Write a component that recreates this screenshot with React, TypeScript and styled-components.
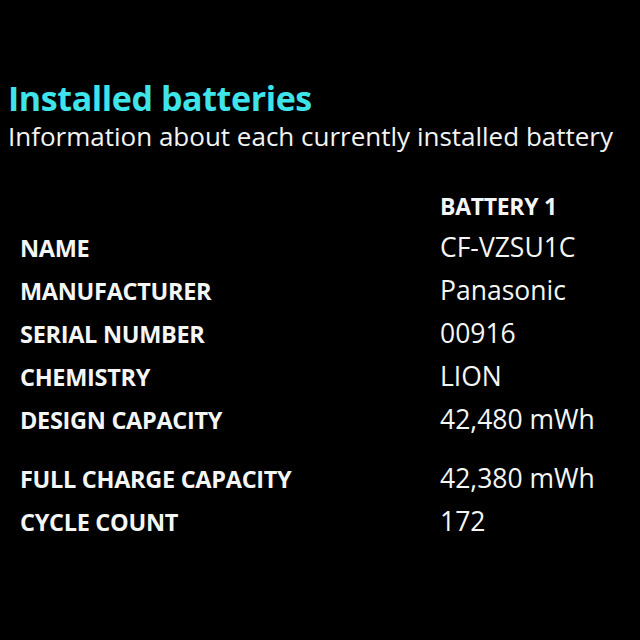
import styled, { createGlobalStyle } from 'styled-components';

const GlobalStyle = createGlobalStyle`
  html, body {
    margin: 0;
    padding: 0;
    background: #000;
  }
  body {
    font-family: "Open Sans", "Noto Sans", sans-serif;
    color: #f4f6f6;
  }
`;

const rows = [
  { label: 'NAME', value: 'CF-VZSU1C' },
  { label: 'MANUFACTURER', value: 'Panasonic' },
  { label: 'SERIAL NUMBER', value: '00916' },
  { label: 'CHEMISTRY', value: 'LION' },
  { label: 'DESIGN CAPACITY', value: '42,480 mWh' },
  { label: 'FULL CHARGE CAPACITY', value: '42,380 mWh', gap: true },
  { label: 'CYCLE COUNT', value: '172' },
];

const App = () => {
  return (
    <Page>
      <GlobalStyle />
      <Title>Installed batteries</Title>
      <Subtitle>Information about each currently installed battery</Subtitle>
      <Table>
        <HeadRow>
          <span />
          <BatteryHead>BATTERY 1</BatteryHead>
        </HeadRow>
        {rows.map((row) => (
          <Row key={row.label} $gap={row.gap}>
            <Label>{row.label}</Label>
            <Value>{row.value}</Value>
          </Row>
        ))}
      </Table>
    </Page>
  );
};

export default App;

const Page = styled.div`
  width: 640px;
  height: 640px;
  box-sizing: border-box;
  padding: 78px 0 0 8px;
  background: #000;
  overflow: hidden;
`;

const Title = styled.h1`
  margin: 0;
  font-size: 34px;
  font-weight: 700;
  line-height: 40px;
  color: #3fe3ea;
  letter-spacing: -0.4px;
`;

const Subtitle = styled.div`
  margin-top: 2px;
  font-size: 26px;
  font-weight: 400;
  line-height: 32px;
  color: #f2f4f4;
  letter-spacing: 0;
  white-space: nowrap;
`;

const Table = styled.div`
  margin-top: 36px;
  padding-left: 12px;
  display: flex;
  flex-direction: column;
`;

const HeadRow = styled.div`
  display: grid;
  grid-template-columns: 420px auto;
  height: 38px;
  line-height: 36px;
`;

const Row = styled.div<{ $gap?: boolean }>`
  display: grid;
  grid-template-columns: 420px auto;
  align-items: baseline;
  height: 43px;
  line-height: 43px;
  margin-top: ${(p) => (p.$gap ? '16px' : '0')};
`;

const Label = styled.span`
  font-size: 23.5px;
  font-weight: 700;
  color: #f4f6f6;
  letter-spacing: -0.3px;
  white-space: nowrap;
`;

const Value = styled.span`
  font-size: 26.5px;
  font-weight: 400;
  color: #f4f6f6;
  letter-spacing: 0;
  white-space: nowrap;
`;

const BatteryHead = styled.span`
  font-size: 23px;
  font-weight: 700;
  color: #f4f6f6;
  letter-spacing: -0.3px;
`;
